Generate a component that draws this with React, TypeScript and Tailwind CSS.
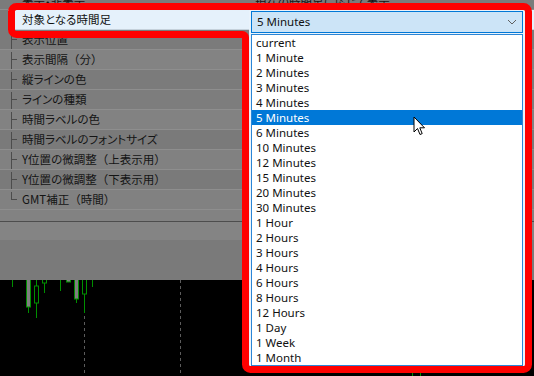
import React from "react";

const jp = "font-['Noto_Sans_CJK_JP',sans-serif] [font-feature-settings:'palt']";
const en = "font-['Noto_Sans',sans-serif]";

const rows = [
  { label: "表示位置", bg: "bg-[#7b7b7b]" },
  { label: "表示間隔（分）", bg: "bg-[#838383]" },
  { label: "縦ラインの色", bg: "bg-[#7b7b7b]" },
  { label: "ラインの種類", bg: "bg-[#7d7d7d]" },
  { label: "時間ラベルの色", bg: "bg-[#828282]" },
  { label: "時間ラベルのフォントサイズ", bg: "bg-[#7a7a7a]" },
  { label: "Y位置の微調整（上表示用）", bg: "bg-[#818181]" },
  { label: "Y位置の微調整（下表示用）", bg: "bg-[#7a7a7a]" },
  { label: "GMT補正（時間）", bg: "bg-[#818181]", last: true },
];

const timeframes = [
  "current", "1 Minute", "2 Minutes", "3 Minutes", "4 Minutes", "5 Minutes",
  "6 Minutes", "10 Minutes", "12 Minutes", "15 Minutes", "20 Minutes",
  "30 Minutes", "1 Hour", "2 Hours", "3 Hours", "4 Hours", "6 Hours",
  "8 Hours", "12 Hours", "1 Day", "1 Week", "1 Month",
];

// full-width brackets keep their normal width, kana stay proportional
const Label = ({ text }: { text: string }) => (
  <span>
    {text.split(/([（）])/).map((part, i) =>
      part === "（" || part === "）" ? (
        <span key={i} className="[font-feature-settings:normal]">{part}</span>
      ) : (
        <span key={i}>{part}</span>
      )
    )}
  </span>
);

const TreeMark = ({ last }: { last?: boolean }) => (
  <svg width="22" height="19" className="shrink-0">
    <line x1="11.5" y1="2" x2="11.5" y2={last ? 10 : 19} stroke="#4c4c4c" />
    <line x1="11.5" y1="9.5" x2="17" y2="9.5" stroke="#4c4c4c" />
  </svg>
);

const Chart = () => (
  <svg width="534" height="96" className="block">
    <line x1="84.5" y1="0" x2="84.5" y2="96" stroke="#5c5c5c" strokeDasharray="3 3" />
    <line x1="180.5" y1="0" x2="180.5" y2="96" stroke="#5c5c5c" strokeDasharray="3 3" />
    <g stroke="#008f00" strokeWidth="1">
      <line x1="12.5" y1="0" x2="12.5" y2="7" />
      <line x1="28.5" y1="27" x2="28.5" y2="33" />
      <rect x="26.5" y="-1" width="4" height="28" fill="#7f7f7f" />
      <line x1="36.5" y1="0" x2="36.5" y2="6" />
      <line x1="36.5" y1="23" x2="36.5" y2="38" />
      <rect x="34.5" y="6" width="4" height="17" fill="none" />
      <line x1="44.5" y1="3" x2="44.5" y2="13" />
      <rect x="42.5" y="-1" width="4" height="4" fill="none" />
      <line x1="60.5" y1="0" x2="60.5" y2="11" />
      <rect x="66.5" y="-1" width="4" height="3" fill="#7f7f7f" />
      <line x1="76.5" y1="19" x2="76.5" y2="23" />
      <rect x="74.5" y="-1" width="4" height="20" fill="#7f7f7f" />
      <line x1="84.5" y1="14" x2="84.5" y2="33" />
      <rect x="82.5" y="-1" width="4" height="15" fill="#000" />
      <line x1="92.5" y1="0" x2="92.5" y2="7" />
      <line x1="412.5" y1="92" x2="412.5" y2="96" />
      <line x1="420.5" y1="92" x2="420.5" y2="96" />
    </g>
  </svg>
);

const Cursor = () => (
  <svg width="13" height="21" viewBox="0 0 13 21" className="absolute left-[413px] top-[116px]">
    <path
      d="M1 1 L1 16 L4.5 12.5 L7 18.5 L9.2 17.6 L6.8 11.8 L11.5 11.8 Z"
      fill="#fff"
      stroke="#000"
      strokeWidth="1"
      strokeLinejoin="round"
    />
  </svg>
);

const Highlight = () => (
  <svg width="534" height="376" className="absolute inset-0 pointer-events-none">
    <path
      d="M16.5 6.5 H523.5 A5 5 0 0 1 528.5 11.5 V364.5 A5 5 0 0 1 523.5 369.5 H250.5 A5 5 0 0 1 245.5 364.5 V37.5 A3 3 0 0 0 242.5 34.5 H16.5 A5 5 0 0 1 11.5 29.5 V11.5 A5 5 0 0 1 16.5 6.5 Z"
      fill="none"
      stroke="#ff0000"
      strokeWidth="7"
    />
  </svg>
);

const Dropdown = () => (
  <div className="absolute left-[249px] top-[10px] w-[276px] h-[356px] bg-[#eaf3fb]">
    <div className={`ml-[2px] mt-[1px] w-[272px] h-[22px] border border-[#0078d7] bg-[#cce4f7] flex items-center justify-between pl-[5px] pr-[5px] text-[11.5px] text-[#111] ${en}`}>
      <span>5 Minutes</span>
      <svg width="10" height="6">
        <polyline points="1,1 5,5 9,1" fill="none" stroke="#606060" strokeWidth="1" />
      </svg>
    </div>
    <div className={`ml-[2px] mt-[1px] w-[272px] border border-[#2b86d6] bg-white text-[11.5px] ${en}`}>
      {timeframes.map((tf) => (
        <div
          key={tf}
          className={`h-[15px] leading-[15px] pl-[4px] ${tf === "5 Minutes" ? "bg-[#0078d7] text-white" : "text-[#111]"}`}
        >
          {tf}
        </div>
      ))}
    </div>
  </div>
);

const App = () => {
  return (
    <div className="relative w-[534px] h-[376px] overflow-hidden bg-black">
      <div className={`h-[280px] flex flex-col bg-[#7b7b7b] text-[11.5px] text-[#141414] ${jp}`}>
        <div className="-mt-[10px] h-[20px] shrink-0 flex items-center border-b border-[#8e8e8e] overflow-hidden">
          <span className="w-[249px] pl-[22px] pt-[4px] leading-[16px]">表示・非表示</span>
          <span className="pl-[6px] pt-[4px] leading-[16px]">現在の時間足に応じて表示</span>
        </div>
        <div className="h-[20px] shrink-0 flex">
          <div className="w-[8px] bg-[#7b7b7b]" />
          <div className="flex-1 flex items-center bg-[#e5f1fb] border-b border-[#c5d1db] pl-[14px] text-[#111]">
            対象となる時間足
          </div>
        </div>
        {rows.map((row) => (
          <div key={row.label} className={`h-[20px] shrink-0 flex items-center border-b border-[#8e8e8e] ${row.bg}`}>
            <TreeMark last={row.last} />
            <Label text={row.label} />
          </div>
        ))}
        <div className="h-[11px] shrink-0 bg-[#828282]" />
        <div className="h-px shrink-0 bg-[#4d4d4d]" />
        <div className="h-[18px] shrink-0 bg-[#848484]" />
        <div className="h-[40px] shrink-0 bg-[#7a7a7a]" />
      </div>
      <Chart />
      <Dropdown />
      <Highlight />
      <Cursor />
    </div>
  );
};

export default App;
